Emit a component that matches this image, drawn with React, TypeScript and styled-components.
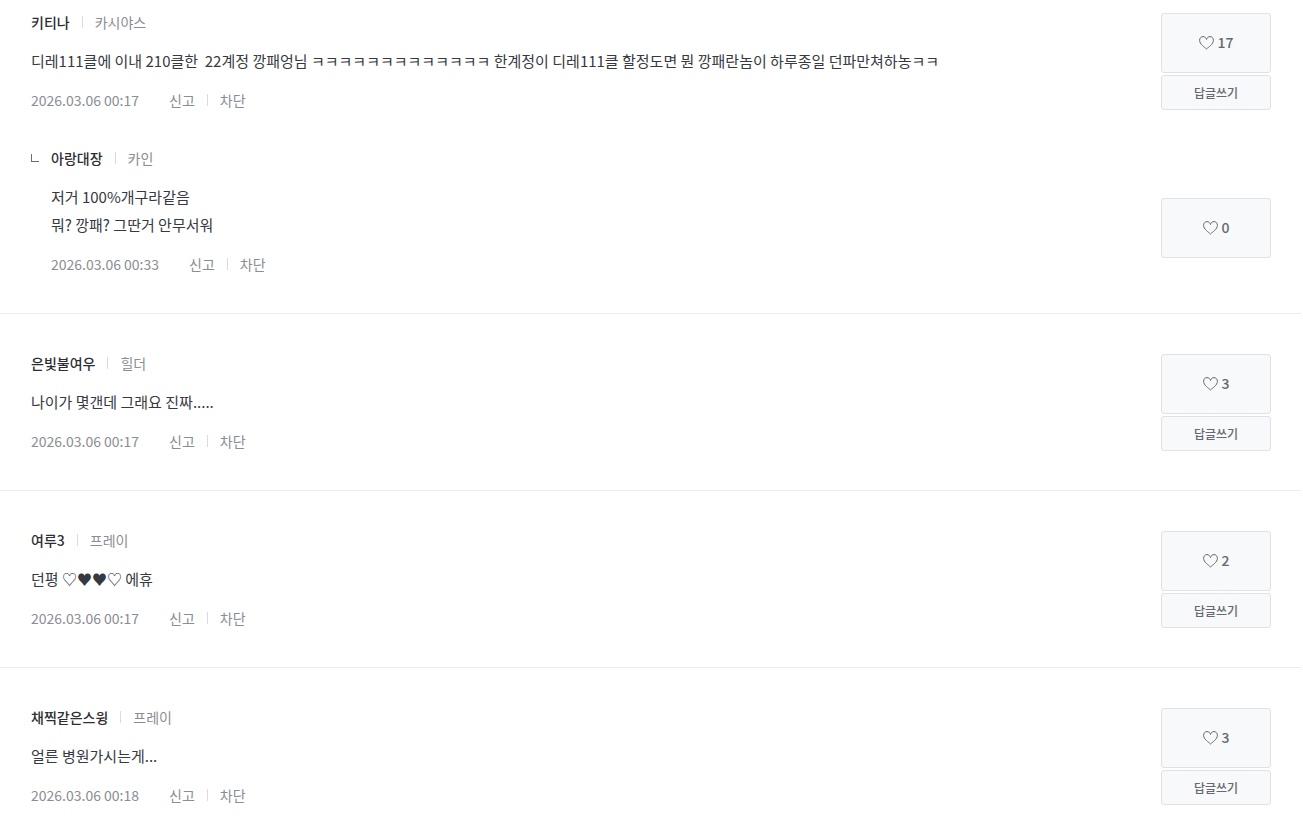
import React from 'react';
import styled, { createGlobalStyle } from 'styled-components';

const GlobalStyle = createGlobalStyle`
  * { box-sizing: border-box; }
  body {
    margin: 0;
    background: #fff;
    color: #36393f;
    font-family: "Noto Sans CJK KR", "Noto Sans", sans-serif;
    font-size: 14px;
    line-height: 20px;
  }
  button { font-family: inherit; margin: 0; cursor: pointer; }
`;

const Page = styled.main`
  margin-right: 2px;
  overflow: hidden;
`;

const List = styled.ul`
  list-style: none;
  margin: 0;
  padding: 0;
`;

const Thread = styled.li<{ $first?: boolean }>`
  padding: ${p => (p.$first ? 13 : 40)}px 30px 39px 31px;
  border-bottom: 1px solid #ebecef;
  &:last-child { border-bottom: 0; }
`;

const Entry = styled.article<{ $reply?: boolean }>`
  display: flex;
  justify-content: space-between;
  gap: 30px;
  margin-top: ${p => (p.$reply ? 39 : 0)}px;
`;

const Main = styled.div<{ $reply?: boolean }>`
  flex: 1;
  min-width: 0;
  padding-left: ${p => (p.$reply ? 20 : 0)}px;
`;

const Header = styled.header<{ $reply?: boolean }>`
  display: flex;
  align-items: center;
  height: 18px;
  margin-left: ${p => (p.$reply ? -20 : 0)}px;
`;

const ReplyMark = styled.span`
  width: 8px;
  height: 8px;
  margin-right: 12px;
  border: solid #6a6e76;
  border-width: 0 0 1px 1px;
`;

const Name = styled.strong`
  font-weight: 500;
  color: #2b2e34;
`;

const Muted = styled.span`
  color: #8a8d94;
`;

const Divider = styled.span`
  width: 1px;
  height: 12px;
  margin: 0 12px;
  background: #d9dbe0;
`;

const Body = styled.p`
  margin: 16px 0 15px;
  font-size: 15px;
  line-height: 28px;
  white-space: pre-wrap;
`;

const Footer = styled.footer`
  display: flex;
  align-items: center;
  height: 20px;
`;

const Time = styled.time`
  margin-right: 30px;
  color: #8a8d94;
`;

const TextButton = styled.button`
  padding: 0;
  border: 0;
  background: none;
  color: #8a8d94;
  font-size: 14px;
  line-height: 20px;
`;

const Actions = styled.div<{ $reply?: boolean }>`
  display: flex;
  flex-direction: column;
  gap: 2px;
  width: 110px;
  margin-top: ${p => (p.$reply ? 49 : 0)}px;
`;

const BoxButton = styled.button`
  display: flex;
  align-items: center;
  justify-content: center;
  gap: 4px;
  padding: 0;
  border: 1px solid #dee1e7;
  border-radius: 3px;
  background: #f7f9fb;
  color: #65686f;
  font-weight: 500;
`;

const LikeButton = styled(BoxButton)`
  height: 60px;
  padding-bottom: 2px;
  font-size: 14px;
`;

const ReplyButton = styled(BoxButton)`
  height: 35px;
  font-size: 12px;
`;

const Heart = () => (
  <svg width="15" height="16" viewBox="0 0 15 16" fill="none" stroke="#65686f" strokeWidth="1" aria-hidden="true">
    <path d="M7.500 15C5.500 13 .6 10.300.6 6.300.6 4.100 2 2.600 4 2.600 5.800 2.600 7 3.700 7.500 5.500 8 3.700 9.200 2.600 11 2.600c2 0 3.400 1.500 3.400 3.700C14.400 10.300 9.500 13 7.500 15Z" />
  </svg>
);

type Comment = {
  name: string;
  server: string;
  text: string;
  time: string;
  likes: number;
  replies?: Comment[];
};

const comments: Comment[] = [
  {
    name: '키티나',
    server: '카시야스',
    text: '디레111클에 이내 210클한  22계정 깡패엉님 ㅋㅋㅋㅋㅋㅋㅋㅋㅋㅋㅋㅋㅋ 한계정이 디레111클 할정도면 뭔 깡패란놈이 하루종일 던파만쳐하농ㅋㅋ',
    time: '2026.03.06 00:17',
    likes: 17,
    replies: [
      {
        name: '아랑대장',
        server: '카인',
        text: '저거 100%개구라같음\n뭐? 깡패? 그딴거 안무서워',
        time: '2026.03.06 00:33',
        likes: 0,
      },
    ],
  },
  { name: '은빛불여우', server: '힐더', text: '나이가 몇갠데 그래요 진짜.....', time: '2026.03.06 00:17', likes: 3 },
  { name: '여루3', server: '프레이', text: '던평 ♡♥♥♡ 에휴', time: '2026.03.06 00:17', likes: 2 },
  { name: '채찍같은스윙', server: '프레이', text: '얼른 병원가시는게...', time: '2026.03.06 00:18', likes: 3 },
];

const CommentEntry = ({ comment, reply }: { comment: Comment; reply?: boolean }) => (
  <Entry $reply={reply}>
    <Main $reply={reply}>
      <Header $reply={reply}>
        {reply && <ReplyMark />}
        <Name>{comment.name}</Name>
        <Divider />
        <Muted>{comment.server}</Muted>
      </Header>
      <Body>{comment.text}</Body>
      <Footer>
        <Time>{comment.time}</Time>
        <TextButton type="button">신고</TextButton>
        <Divider />
        <TextButton type="button">차단</TextButton>
      </Footer>
    </Main>
    <Actions $reply={reply}>
      <LikeButton type="button">
        <Heart />
        {comment.likes}
      </LikeButton>
      {!reply && <ReplyButton type="button">답글쓰기</ReplyButton>}
    </Actions>
  </Entry>
);

export default function App() {
  return (
    <Page>
      <GlobalStyle />
      <List>
        {comments.map((comment, i) => (
          <Thread key={comment.name} $first={i === 0}>
            <CommentEntry comment={comment} />
            {comment.replies?.map(r => (
              <CommentEntry key={r.name} comment={r} reply />
            ))}
          </Thread>
        ))}
      </List>
    </Page>
  );
}
